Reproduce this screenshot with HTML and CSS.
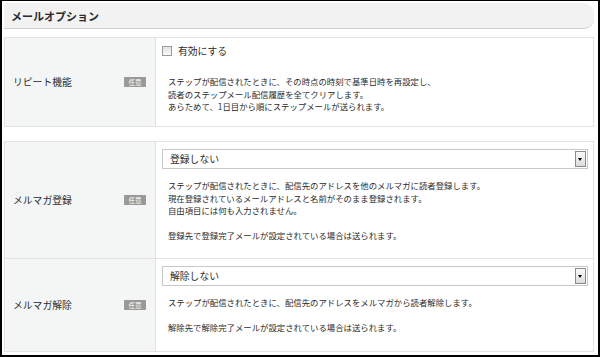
FILE: index.html
```html
<!DOCTYPE html>
<html>
<head>
    <meta charset="utf-8">
    <title>メールオプション</title>
    <link rel="stylesheet" href="styles.css">
</head>
<body>
    <div class="frame">
        <div class="section-header">メールオプション</div>

        <div class="option-table first">
            <div class="option-row row-repeat">
                <div class="option-label">
                    <span class="label-text">リピート機能</span>
                    <span class="badge">任意</span>
                </div>
                <div class="option-body">
                    <label class="check-line">
                        <span class="checkbox"></span>
                        <span>有効にする</span>
                    </label>
                    <div class="desc">
                        ステップが配信されたときに、その時点の時刻で基準日時を再設定し、<br>
                        読者のステップメール配信履歴を全てクリアします。<br>
                        あらためて、1日目から順にステップメールが送られます。
                    </div>
                </div>
            </div>
        </div>

        <div class="option-table second">
            <div class="option-row row-regist">
                <div class="option-label">
                    <span class="label-text">メルマガ登録</span>
                    <span class="badge">任意</span>
                </div>
                <div class="option-body">
                    <div class="select-box">
                        <span class="select-value">登録しない</span>
                        <span class="select-arrow"></span>
                    </div>
                    <div class="desc">
                        ステップが配信されたときに、配信先のアドレスを他のメルマガに読者登録します。<br>
                        現在登録されているメールアドレスと名前がそのまま登録されます。<br>
                        自由項目には何も入力されません。<br>
                        <br>
                        登録先で登録完了メールが設定されている場合は送られます。
                    </div>
                </div>
            </div>
            <div class="option-row row-cancel">
                <div class="option-label">
                    <span class="label-text">メルマガ解除</span>
                    <span class="badge">任意</span>
                </div>
                <div class="option-body">
                    <div class="select-box">
                        <span class="select-value">解除しない</span>
                        <span class="select-arrow"></span>
                    </div>
                    <div class="desc">
                        ステップが配信されたときに、配信先のアドレスをメルマガから読者解除します。<br>
                        <br>
                        解除先で解除完了メールが設定されている場合は送られます。
                    </div>
                </div>
            </div>
        </div>
    </div>
</body>
</html>
```

FILE: styles.css
```css
html, body {
    margin: 0;
    padding: 0;
    background-color: #fff;
}

body {
    font-family: "Noto Sans CJK JP", "Noto Sans", sans-serif;
    color: #2b2b2b;
}

.frame {
    box-sizing: border-box;
    width: 600px;
    height: 357px;
    border: 2px solid #000;
    border-top-width: 1px;
    padding: 2px 4px 0 2px;
}

.section-header {
    height: 25px;
    background-color: #f2f2f2;
    border-bottom: 1px solid #cfcfcf;
    border-radius: 0 10px 10px 0;
    padding-left: 7px;
    font-size: 11px;
    font-weight: bold;
    line-height: 26px;
    color: #2b2b2b;
}

.option-table {
    border: 1px solid #e2e2e2;
}

.option-table.first {
    margin-top: 8px;
}

.option-table.second {
    margin-top: 14px;
}

.option-row {
    display: flex;
}

.option-row + .option-row {
    border-top: 1px solid #e2e2e2;
}

.row-repeat {
    height: 88px;
}

.row-regist {
    height: 116px;
}

.row-cancel {
    height: 92px;
}

.option-label {
    width: 151px;
    flex: none;
    display: flex;
    align-items: center;
    justify-content: space-between;
    box-sizing: border-box;
    padding: 0 9px 0 8px;
    background-color: #f4f5f5;
    border-right: 1px solid #e2e2e2;
    font-size: 9.8px;
    color: #2b2b2b;
}

.badge {
    width: 22px;
    height: 10px;
    background-color: #999;
    color: #fff;
    font-size: 6.5px;
    line-height: 10px;
    text-align: center;
    border-radius: 1px;
}

.option-body {
    flex: 1;
    padding: 7px 5px 0 6px;
}

.check-line {
    display: flex;
    align-items: center;
    height: 14px;
    margin-top: -1px;
    font-size: 9.8px;
    color: #2b2b2b;
}

.checkbox {
    width: 8px;
    height: 8px;
    margin: 0 6px 0 0;
    border: 1px solid #9a9a9a;
    background: linear-gradient(#e2e2e2, #fbfbfb);
}

.row-repeat .desc {
    margin-top: 17px;
}

.select-box {
    display: flex;
    align-items: center;
    justify-content: space-between;
    box-sizing: border-box;
    height: 20px;
    border: 1px solid #c8c8c8;
    background-color: #fff;
    padding: 0 1px 0 7px;
    font-size: 9.8px;
    color: #2b2b2b;
}

.select-arrow {
    position: relative;
    box-sizing: border-box;
    width: 11px;
    height: 16px;
    border: 1px solid #8a8a8a;
    background: linear-gradient(#fafafa, #dcdcdc);
}

.select-arrow::after {
    content: "";
    position: absolute;
    left: 2px;
    top: 6px;
    border-left: 2.5px solid transparent;
    border-right: 2.5px solid transparent;
    border-top: 3px solid #000;
}

.desc {
    margin-top: 10px;
    padding-left: 6px;
    font-size: 8.4px;
    line-height: 12.5px;
    color: #2b2b2b;
}
```
